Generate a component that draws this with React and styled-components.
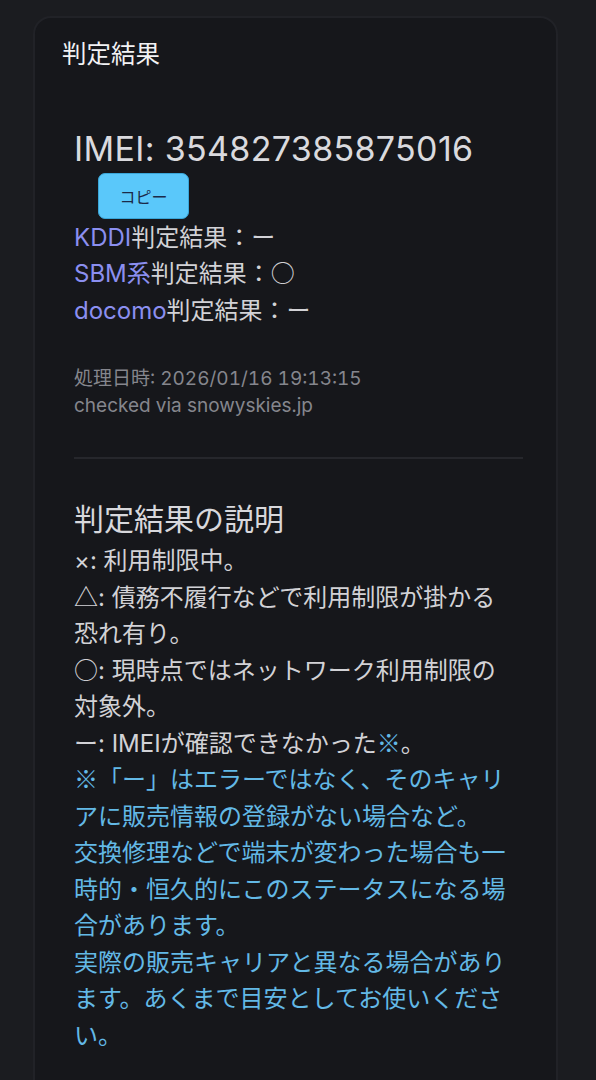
import styled, { createGlobalStyle } from 'styled-components';

const GlobalStyle = createGlobalStyle`
    html, body {
        margin: 0;
        padding: 0;
        background: #1b1c20;
    }
    body {
        font-family: Inter, "Noto Sans CJK JP", sans-serif;
        -webkit-font-smoothing: antialiased;
    }
`;

const Page = styled.div`
    padding: 16px 38px 0 33px;
    height: 1080px;
    overflow: hidden;
    box-sizing: border-box;
`;

const Card = styled.section`
    background: #16171b;
    border: 2px solid #212227;
    border-radius: 18px;
    padding: 18px 33px 80px 27px;
`;

const CardTitle = styled.h1`
    margin: 0;
    font-size: 24.5px;
    line-height: 36px;
    font-weight: 400;
    color: #f2f2f4;
`;

const ResultBody = styled.div`
    padding-left: 12px;
`;

const Imei = styled.h2`
    margin: 57px 0 0;
    font-size: 34px;
    line-height: 1.2;
    font-weight: 400;
    letter-spacing: 0.33px;
    color: #dadade;
`;

const CopyButton = styled.button`
    display: block;
    margin: 3px 0 0 24px;
    width: 91px;
    height: 46px;
    border: 1px solid #3aa6d8;
    border-radius: 7px;
    background: #5ac8fa;
    color: #1b2a48;
    font-family: Inter, "Noto Sans CJK JP", sans-serif;
    font-size: 16px;
    padding: 0;
`;

const CarrierList = styled.div`
    margin-top: 1px;
    font-size: 24px;
    line-height: 36.5px;
    color: #d2d2d6;
`;

const Carrier = styled.span`
    color: #8b8ff0;
`;

// full-width symbols (○ △ ※) come from the CJK font, as on the phone
const Mark = styled.span`
    font-family: "Noto Sans CJK JP", sans-serif;
    line-height: 1;
    color: ${props => props.note ? '#63b9e6' : 'inherit'};
`;

const Meta = styled.div`
    margin-top: 36px;
    font-size: 19px;
    line-height: 27px;
    font-variant-numeric: tabular-nums;
    color: #85868d;
`;

const Divider = styled.hr`
    margin: 37.5px 0 0;
    border: 0;
    height: 2px;
    background: #26272c;
`;

const ExplainTitle = styled.h3`
    margin: 41.5px 0 0;
    font-size: 30px;
    line-height: 39px;
    font-weight: 400;
    color: #d8d8dc;
`;

const Explain = styled.p`
    margin: 4px 0 0;
    padding-right: 9px;
    font-size: 24px;
    line-height: 36.5px;
    color: #d2d2d6;
`;

const Note = styled.span`
    color: #63b9e6;
`;

const carriers = [
    { name: 'KDDI', mark: 'ー' },
    { name: 'SBM系', mark: '○' },
    { name: 'docomo', mark: 'ー' },
];

export default function App() {
    return (
        <>
            <GlobalStyle />
            <Page>
                <Card>
                    <CardTitle>判定結果</CardTitle>
                    <ResultBody>
                        <Imei>IMEI: 354827385875016</Imei>
                        <CopyButton>コピー</CopyButton>
                        <CarrierList>
                            {carriers.map((c) => (
                                <div key={c.name}>
                                    <Carrier>{c.name}</Carrier>判定結果：<Mark>{c.mark}</Mark>
                                </div>
                            ))}
                        </CarrierList>
                        <Meta>
                            <div>処理日時: 2026/01/16 19:13:15</div>
                            <div>checked via snowyskies.jp</div>
                        </Meta>
                        <Divider />
                        <ExplainTitle>判定結果の説明</ExplainTitle>
                        <Explain>
                            ×: 利用制限中。<br />
                            <Mark>△</Mark>: 債務不履行などで利用制限が掛かる恐れ有り。<br />
                            <Mark>○</Mark>: 現時点ではネットワーク利用制限の対象外。<br />
                            ー: IMEIが確認できなかった<Mark note>※</Mark>。<br />
                            <Note>
                                <Mark>※</Mark>「ー」はエラーではなく、そのキャリアに販売情報の登録がない場合など。<br />
                                交換修理などで端末が変わった場合も一時的・恒久的にこのステータスになる場合があります。<br />
                                実際の販売キャリアと異なる場合があります。あくまで目安としてお使いください。
                            </Note>
                        </Explain>
                    </ResultBody>
                </Card>
            </Page>
        </>
    );
}
